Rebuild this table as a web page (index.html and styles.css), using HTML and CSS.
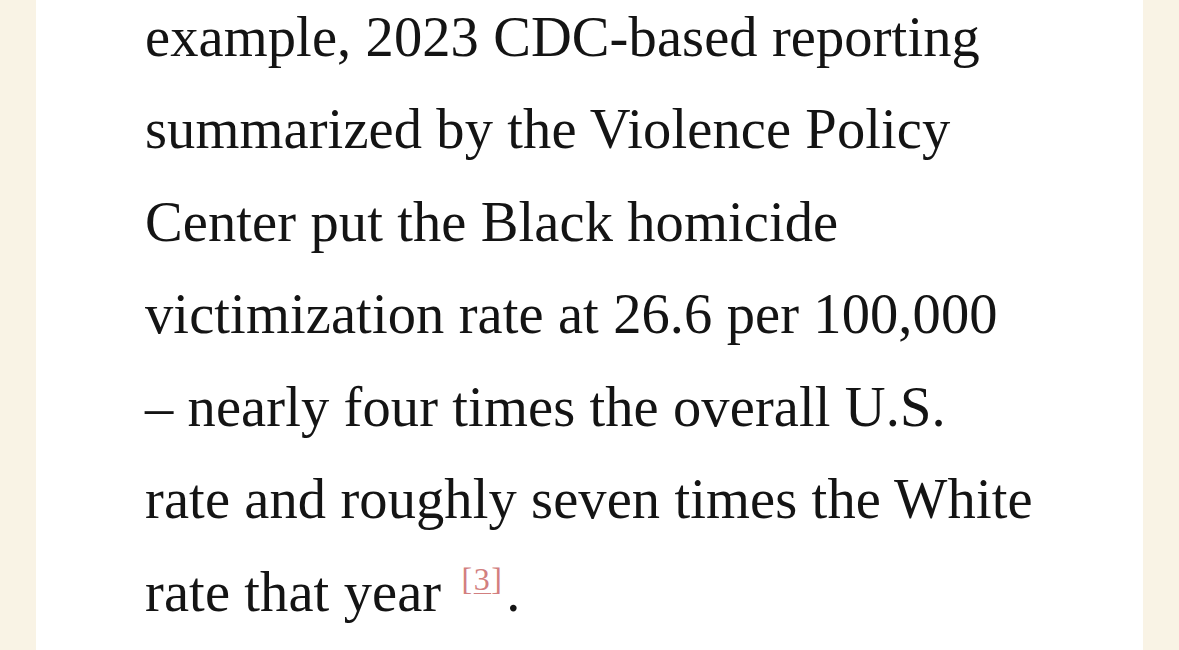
FILE: index.html
```html
<!DOCTYPE html>
<html lang="en">
<head>
<meta charset="utf-8">
<title>Article</title>
<link rel="stylesheet" href="styles.css">
</head>
<body>
<main class="page">
  <article class="article">
    <p class="para">example, 2023 CDC-based reporting<br>summarized by the Violence Policy<br>Center put the Black homicide<br>victimization rate at 26.6 per 100,000<br>– nearly four times the overall U.S.<br>rate and roughly seven times the White<br>rate that year <sup class="ref">[<a href="#fn3">3</a>]</sup>.</p>
  </article>
</main>
</body>
</html>
```
FILE: styles.css
```css
html, body {
  margin: 0;
  padding: 0;
  background: #f9f3e5;
  height: 100%;
  overflow: hidden;
}
.page {
  margin: 0 36px;
  background: #ffffff;
  height: 650px;
}
.article {
  padding-left: 109px;
}
.para {
  margin: 0;
  font-family: "Liberation Serif", "Times New Roman", serif;
  font-size: 56.5px;
  letter-spacing: 0.1px;
  line-height: 92.6px;
  color: #141414;
  position: relative;
  top: -9.5px;
}
.ref {
  font-size: 32px;
  letter-spacing: 1.5px;
  line-height: 0;
  vertical-align: 21px;
  color: #d27f7f;
  margin-left: 6px;
  margin-right: 3px;
}
.ref a {
  color: #d27f7f;
  text-decoration: underline;
  text-decoration-thickness: 1px;
  text-underline-offset: 3px;
}
```
